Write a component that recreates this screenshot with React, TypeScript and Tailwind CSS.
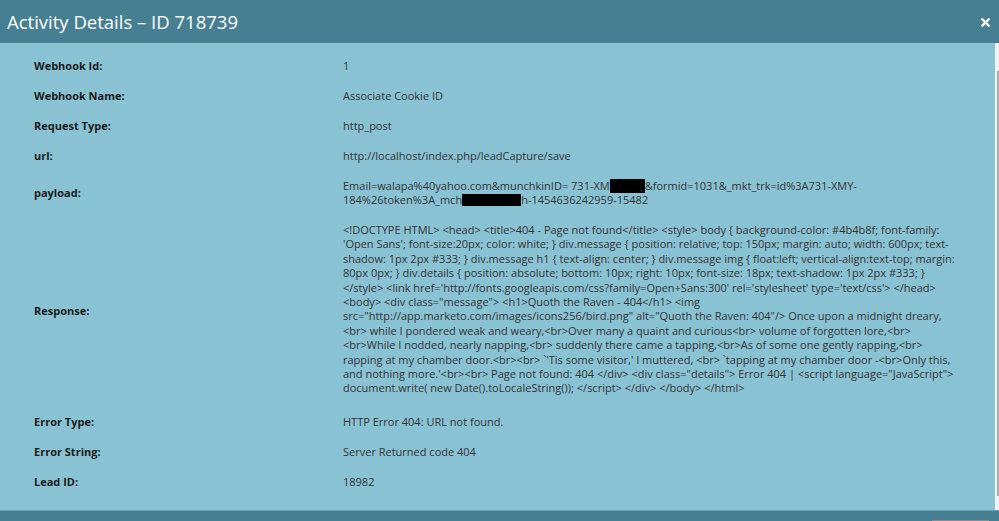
import { X } from "lucide-react";

type Row = {
  label: string;
  value: React.ReactNode;
};

const responseLines = [
  `<!DOCTYPE HTML> <head> <title>404 - Page not found</title> <style> body { background-color: #4b4b8f; font-family:`,
  `'Open Sans'; font-size:20px; color: white; } div.message { position: relative; top: 150px; margin: auto; width: 600px; text-`,
  `shadow: 1px 2px #333; } div.message h1 { text-align: center; } div.message img { float:left; vertical-align:text-top; margin:`,
  `80px 0px; } div.details { position: absolute; bottom: 10px; right: 10px; font-size: 18px; text-shadow: 1px 2px #333; }`,
  `</style> <link href='http://fonts.googleapis.com/css?family=Open+Sans:300' rel='stylesheet' type='text/css'> </head>`,
  `<body> <div class="message"> <h1>Quoth the Raven - 404</h1> <img`,
  `src="http://app.marketo.com/images/icons256/bird.png" alt="Quoth the Raven: 404"/> Once upon a midnight dreary,`,
  `<br> while I pondered weak and weary,<br>Over many a quaint and curious<br> volume of forgotten lore,<br>`,
  `<br>While I nodded, nearly napping,<br> suddenly there came a tapping,<br>As of some one gently rapping,<br>`,
  `rapping at my chamber door.<br><br> \`'Tis some visitor,' I muttered, <br> \`tapping at my chamber door -<br>Only this,`,
  `and nothing more.'<br><br> Page not found: 404 </div> <div class="details"> Error 404 | <script language="JavaScript">`,
  `document.write( new Date().toLocaleString()); </script> </div> </body> </html>`,
];

function Payload() {
  return (
    <div>
      <div className="whitespace-nowrap">
        Email=walapa%40yahoo.com&amp;munchkinID= 731-XM
        <span className="inline-block w-[35px] h-[14px] bg-black align-[-3px]" />
        &amp;formid=1031&amp;_mkt_trk=id%3A731-XMY-
      </div>
      <div className="whitespace-nowrap">
        184%26token%3A_mch
        <span className="inline-block w-[59px] h-[12px] bg-black align-[-2px]" />
        h-1454636242959-15482
      </div>
    </div>
  );
}

function Response() {
  return (
    <div className="pb-[3px] leading-[14.4px]">
      {responseLines.map((line, i) => (
        <div key={i} className="whitespace-nowrap">
          {line}
        </div>
      ))}
    </div>
  );
}

const rows: Row[] = [
  { label: "Webhook Id:", value: "1" },
  { label: "Webhook Name:", value: "Associate Cookie ID" },
  { label: "Request Type:", value: "http_post" },
  { label: "url:", value: "http://localhost/index.php/leadCapture/save" },
  { label: "payload:", value: <Payload /> },
  { label: "Response:", value: <Response /> },
  { label: "Error Type:", value: "HTTP Error 404: URL not found." },
  { label: "Error String:", value: "Server Returned code 404" },
  { label: "Lead ID:", value: "18982" },
];

export default function App() {
  return (
    <div className="w-[999px] h-[521px] overflow-hidden flex flex-col font-['Open_Sans',sans-serif]">
      <div className="h-[43px] shrink-0 bg-[#467f91] flex items-center justify-between pl-[7px] pr-[7px]">
        <h1 className="text-[18.5px] text-white leading-none pt-[2px]">
          Activity Details – ID 718739
        </h1>
        <X className="w-[13px] h-[13px] text-white mt-[2px]" strokeWidth={4.5} />
      </div>

      <div className="flex-1 flex bg-[#89c2d3] min-h-0">
        <div className="flex-1 pt-[8px]">
          {rows.map((row) => (
            <div
              key={row.label}
              className="grid grid-cols-[309px_1fr] items-center pl-[34px] py-[8px] text-[11px] leading-[14px]"
            >
              <div className="font-bold text-[#1b1b1b]">{row.label}</div>
              <div className="text-[#333]">{row.value}</div>
            </div>
          ))}
        </div>
        <div className="w-[4px] bg-[#f1f1f1] flex">
          <div className="ml-[2px] mt-[28px] w-[2px] h-[425px] bg-[#a8a8a8]" />
        </div>
      </div>

      <div className="h-[11px] shrink-0 bg-[#467f91] border-t border-[#6aa5b6] flex justify-end items-end pr-[10px]">
        <div className="w-[57px] h-px bg-[#8a8a8a]" />
      </div>
    </div>
  );
}
